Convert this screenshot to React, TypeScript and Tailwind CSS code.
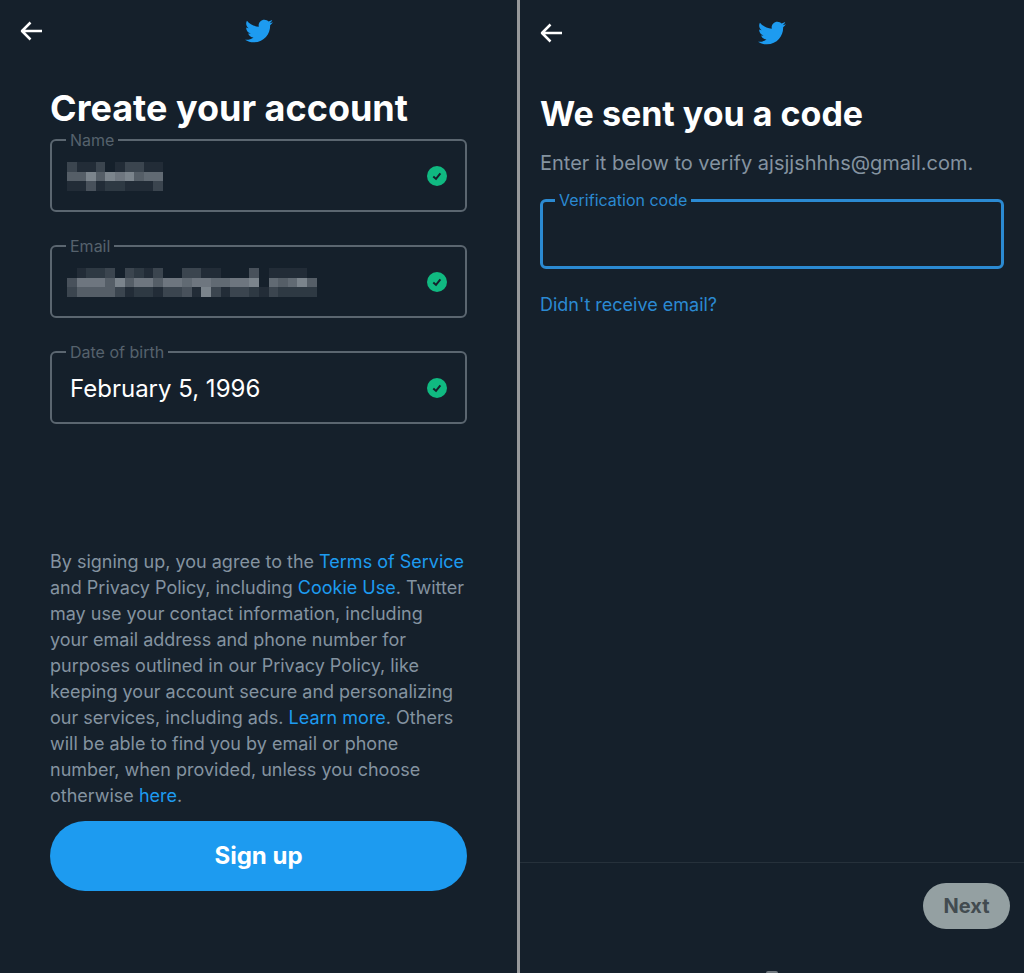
import React from 'react';
import { FaTwitter } from 'react-icons/fa';

const fields = [
  {
    id: 'name',
    label: 'Name',
    value: '',
    mosaic: ['3113013311', '5585878566', '1141221113']
  },
  {
    id: 'email',
    label: 'Email',
    value: '',
    mosaic: [
      '01223032130033110004011110',
      '47775857757767766778065685',
      '35555312213341831332132222'
    ]
  },
  {
    id: 'birth',
    label: 'Date of birth',
    value: 'February 5, 1996',
    mosaic: null
  }
];

function Header({ className }: { className: string }) {
  return (
    <header className={`grid grid-cols-3 items-center px-5 ${className}`}>
      <button type="button" aria-label="Back" className="justify-self-start">
        <svg width="22" height="20" viewBox="0 0 22 20" fill="none" stroke="white" strokeWidth="2.5">
          <path d="M10.5 1.5 2 10l8.5 8.5M2 10h20" strokeLinejoin="round" />
        </svg>
      </button>
      <FaTwitter className="w-7 h-7 text-[#1d9bf0] justify-self-center" />
    </header>
  );
}

// Hidden value, one digit per block: 0 is clear, 9 is brightest
function Mosaic({ rows }: { rows: string[] }) {
  const cols = rows[0].length;
  return (
    <svg
      width={cols * 9.6}
      height="29"
      viewBox={`0 0 ${cols} 3`}
      preserveAspectRatio="none"
      shapeRendering="crispEdges"
      className="absolute left-px top-1 pointer-events-none"
    >
      {rows.map((row, y) =>
        row.split('').map((level, x) => (
          <rect key={`${x}-${y}`} x={x} y={y} width="1" height="1" fill="#a3aab2" opacity={Number(level) * 0.09} />
        ))
      )}
    </svg>
  );
}

function CheckBadge() {
  return (
    <svg width="20" height="20" viewBox="0 0 20 20" className="shrink-0">
      <circle cx="10" cy="10" r="10" fill="#10b981" />
      <path d="M6.3 10.5 9 12.9l4.4-5.6" fill="none" stroke="#15202b" strokeWidth="2" />
    </svg>
  );
}

export default function App() {
  return (
    <div className="min-h-screen grid grid-cols-[517fr_507fr] bg-[#15202b] font-['Inter',sans-serif]">
      <main className="flex flex-col">
        <Header className="h-[62px]" />
        <form className="px-[50px] pt-6" onSubmit={(e) => e.preventDefault()}>
          <h1 className="text-4xl leading-[44px] font-bold text-white whitespace-nowrap">Create your account</h1>
          <div className="flex flex-col gap-6">
            {fields.map((field) => (
              <fieldset key={field.id} className="h-[82px] border-2 border-[#5b6670] rounded-md px-[14px]">
                <legend className="px-1 text-base leading-5 text-[#56626d]">
                  <label htmlFor={field.id}>{field.label}</label>
                </legend>
                <div className="flex items-center pt-2 pr-1">
                  <div className="relative flex-1">
                    <input
                      id={field.id}
                      defaultValue={field.value}
                      className="w-full h-9 px-1 bg-transparent text-2xl text-white outline-none"
                    />
                    {field.mosaic && <Mosaic rows={field.mosaic} />}
                  </div>
                  <CheckBadge />
                </div>
              </fieldset>
            ))}
          </div>

          <p className="mt-[125px] text-lg leading-[26px] text-[#8493a0]">
            By signing up, you agree to the{' '}
            <a href="#" className="text-[#1d9bf0]">Terms of Service</a>{' '}
            and Privacy Policy, including{' '}
            <a href="#" className="text-[#1d9bf0]">Cookie Use</a>. Twitter may use your contact
            information, including
            <br />
            your email address and phone number for
            <br />
            purposes outlined in our Privacy Policy, like
            <br />
            keeping your account secure and personalizing our services,
            including ads. <a href="#" className="text-[#1d9bf0]">Learn more</a>. Others
            <br />
            will be able to find you by email or phone
            <br />
            number, when provided, unless you choose
            <br />
            otherwise <a href="#" className="text-[#1d9bf0]">here</a>.
          </p>

          <button type="submit" className="mt-3 w-full h-[70px] rounded-full bg-[#1d9bf0] text-2xl font-bold text-white">
            Sign up
          </button>
        </form>
      </main>

      <section className="flex flex-col border-l-[3px] border-[#97999b]">
        <Header className="h-[66px]" />
        <form className="flex-1 px-5 pt-6" onSubmit={(e) => e.preventDefault()}>
          <h2 className="text-[34px] leading-[48px] font-bold text-white whitespace-nowrap">We sent you a code</h2>
          <p className="mt-[10px] text-xl leading-[30px] text-[#8493a0] whitespace-nowrap">
            Enter it below to verify ajsjjshhhs@gmail.com.
          </p>
          <fieldset className="mt-3 h-[79px] border-[3px] border-[#2b8ad2] rounded-md px-3">
            <legend className="px-1 text-base leading-5 text-[#2b8ad2]">
              <label htmlFor="code">Verification code</label>
            </legend>
            <input id="code" className="w-full h-11 px-1 bg-transparent text-2xl text-white outline-none" />
          </fieldset>
          <a href="#" className="inline-block mt-6 text-lg leading-6 text-[#2b8ad2]">Didn't receive email?</a>
        </form>
        <footer className="h-[111px] flex flex-col border-t border-[#26313b]">
          <button
            type="button"
            className="self-end mt-5 mr-[14px] w-[87px] h-[46px] rounded-full bg-[#94a0a2] text-xl font-bold text-[#424b50]"
          >
            Next
          </button>
          <div className="mt-auto mx-auto w-3 h-[2px] rounded-t-full bg-[#6f777e]" />
        </footer>
      </section>
    </div>
  );
}
